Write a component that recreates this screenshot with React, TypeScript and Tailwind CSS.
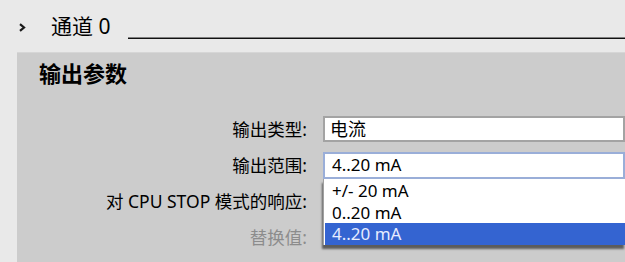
const font = { fontFamily: '"Noto Sans", "Noto Sans CJK SC", sans-serif' }

const options = ['+/- 20 mA', '0..20 mA', '4..20 mA']

export default function App() {
  return (
    <div className="h-[262px] w-[625px] overflow-hidden bg-[#e9e9e9] text-black" style={font}>
      {/* channel header */}
      <div className="flex h-[52px] items-end pb-[13px]">
        <svg className="ml-[18px] mb-[7px] h-[9px] w-[8px]" viewBox="0 0 8 9">
          <path d="M2 1.2 L6 4.5 L2 7.8" fill="none" stroke="#1a1a1a" strokeWidth="2.2" />
        </svg>
        <span className="ml-[25px] text-[21px] leading-[26px]">通道 0</span>
        <div className="ml-[18px] h-[2px] flex-1 border-t border-[#808080] bg-[#111]" />
      </div>

      {/* parameter panel */}
      <div className="ml-[17px] h-[210px] border-t border-[#d6d6d6] bg-[#cccccc]">
        <div className="pl-[22px] pt-[6px] text-[22px] font-bold leading-[29px]">输出参数</div>

        <div className="mt-[23px] flex flex-col">
          <div className="flex h-[36px] items-center">
            <span className="w-[290px] text-right text-[17.5px]">输出类型:</span>
            <div className="ml-[16px] flex h-[26px] flex-1 items-center border-2 border-[#a3a3a3] bg-white pl-[5px] text-[18px]">
              电流
            </div>
          </div>

          <div className="relative flex h-[36px] items-center">
            <span className="w-[290px] text-right text-[17.5px]">输出范围:</span>
            <div className="ml-[16px] flex h-[27px] flex-1 items-center border-2 border-[#9aaed8] bg-white pl-[7px] text-[17px]">
              4..20 mA
            </div>

            {/* open dropdown */}
            <div className="absolute left-[306px] right-0 top-[32px] z-10 border-l border-[#a0a0a0] bg-white shadow-[-1px_4px_2px_rgba(0,0,0,0.55)]">
              {options.map((o, i) => (
                <div
                  key={o}
                  className={
                    i === 2
                      ? 'ml-[1px] flex h-[22px] items-center bg-[#3464d1] pl-[7px] text-[17px] text-[#e6ecff]'
                      : 'flex h-[22px] items-center pl-[8px] pt-[2px] text-[17px]'
                  }
                >
                  {o}
                </div>
              ))}
            </div>
          </div>

          <div className="flex h-[36px] items-center">
            <span className="w-[290px] text-right text-[17.5px]">对 CPU STOP 模式的响应:</span>
          </div>

          <div className="flex h-[36px] items-center">
            <span className="w-[290px] text-right text-[17.5px] text-[#8c8c8c]">替换值:</span>
          </div>
        </div>
      </div>
    </div>
  )
}
